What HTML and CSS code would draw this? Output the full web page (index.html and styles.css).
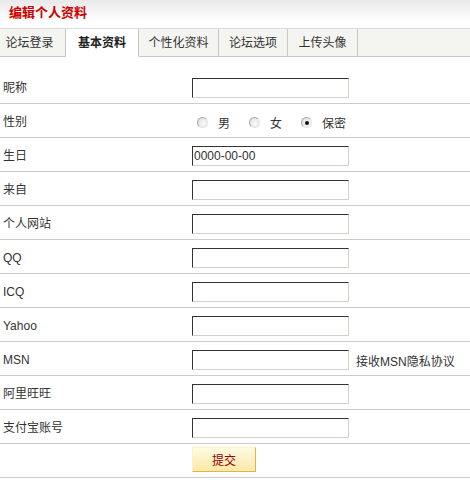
FILE: index.html
```html
<!DOCTYPE html>
<html lang="zh-CN">
<head>
    <meta charset="UTF-8">
    <title>编辑个人资料</title>
    <link rel="stylesheet" href="styles.css">
</head>
<body>
    <div class="title">编辑个人资料</div>
    <ul class="tabs">
        <li class="tab t1">论坛登录</li>
        <li class="tab t2 active">基本资料</li>
        <li class="tab t3">个性化资料</li>
        <li class="tab t4">论坛选项</li>
        <li class="tab t5">上传头像</li>
    </ul>
    <form class="profile">
        <div class="row">
            <label class="label">昵称</label>
            <div class="field"><input type="text" class="txt"></div>
        </div>
        <div class="row">
            <label class="label">性别</label>
            <div class="field radios">
                <label class="opt"><input type="radio" name="sex">男</label>
                <label class="opt"><input type="radio" name="sex">女</label>
                <label class="opt"><input type="radio" name="sex" checked>保密</label>
            </div>
        </div>
        <div class="row">
            <label class="label">生日</label>
            <div class="field"><input type="text" class="txt" value="0000-00-00"></div>
        </div>
        <div class="row">
            <label class="label">来自</label>
            <div class="field"><input type="text" class="txt"></div>
        </div>
        <div class="row">
            <label class="label">个人网站</label>
            <div class="field"><input type="text" class="txt"></div>
        </div>
        <div class="row">
            <label class="label">QQ</label>
            <div class="field"><input type="text" class="txt"></div>
        </div>
        <div class="row">
            <label class="label">ICQ</label>
            <div class="field"><input type="text" class="txt"></div>
        </div>
        <div class="row">
            <label class="label">Yahoo</label>
            <div class="field"><input type="text" class="txt"></div>
        </div>
        <div class="row">
            <label class="label">MSN</label>
            <div class="field"><input type="text" class="txt"><span class="note">接收MSN隐私协议</span></div>
        </div>
        <div class="row">
            <label class="label">阿里旺旺</label>
            <div class="field"><input type="text" class="txt"></div>
        </div>
        <div class="row">
            <label class="label">支付宝账号</label>
            <div class="field"><input type="text" class="txt"></div>
        </div>
        <div class="row submit-row">
            <span class="label"></span>
            <div class="field"><button type="button" class="btn">提交</button></div>
        </div>
    </form>
</body>
</html>
```

FILE: styles.css
```css
* {
    margin: 0;
    padding: 0;
    box-sizing: border-box;
}

body {
    font-family: "Liberation Sans", "Noto Sans CJK SC", sans-serif;
    font-size: 12px;
    color: #333;
    background: #fff;
}

.title {
    height: 28px;
    padding-left: 9px;
    line-height: 25px;
    font-size: 13px;
    font-weight: bold;
    color: #c00;
    background: linear-gradient(#e9e9e9, #fff 80%);
}

.tabs {
    list-style: none;
    display: flex;
    height: 29px;
    border-top: 1px solid #ddd;
    border-bottom: 1px solid #c8c8c8;
    background: #f4f4f0;
}

.tab {
    height: 28px;
    line-height: 28px;
    text-align: center;
    border-right: 1px solid #c8c8c8;
    color: #333;
}

.t1 { width: 66px; padding-right: 6px; }
.t2 { width: 73px; }
.t3 { width: 80px; }
.t4 { width: 69px; }
.t5 { width: 70px; }

.tab.active {
    font-weight: bold;
    color: #222;
    background: #fff;
    height: 28px;
    margin-bottom: -1px;
    border-bottom: 1px solid #fff;
}

.profile {
    padding-top: 13px;
}

.row {
    display: flex;
    height: 34px;
    padding-top: 8px;
    border-bottom: 1px solid #ccc;
}

.label {
    width: 192px;
    padding-left: 3px;
    line-height: 20px;
    color: #333;
}

.field {
    display: flex;
    align-items: center;
    height: 20px;
}

.txt {
    width: 157px;
    height: 20px;
    padding: 0 1px;
    border: 1px solid;
    border-color: #333 #d4d0c8 #d4d0c8 #333;
    font-family: "Liberation Sans", sans-serif;
    font-size: 12px;
    color: #333;
    outline: none;
}

.note {
    margin-left: 7px;
    color: #333;
}

.radios {
    padding-left: 5px;
}

.opt {
    display: flex;
    align-items: center;
    margin-right: 19px;
}

.opt input {
    appearance: none;
    width: 11px;
    height: 11px;
    margin-right: 10px;
    border-radius: 50%;
    border: 1px solid;
    border-color: #a8a8a8 #e6e6e6 #e6e6e6 #a8a8a8;
    background: radial-gradient(circle at 60% 60%, #fafafa, #dcdcdc);
    position: relative;
}

.opt input:checked::after {
    content: "";
    position: absolute;
    left: 3px;
    top: 3px;
    width: 4px;
    height: 4px;
    border-radius: 50%;
    background: #111;
}

.submit-row {
    padding-top: 3px;
}

.submit-row .field {
    height: 25px;
}

.btn {
    width: 64px;
    height: 25px;
    border: 1px solid;
    border-color: #fff3c4 #e2b448 #e2b448 #fff3c4;
    background: linear-gradient(#fffbe2, #fde8a6);
    color: #990000;
    font-family: "Noto Sans CJK SC", sans-serif;
    font-size: 12px;
    cursor: pointer;
}
```
